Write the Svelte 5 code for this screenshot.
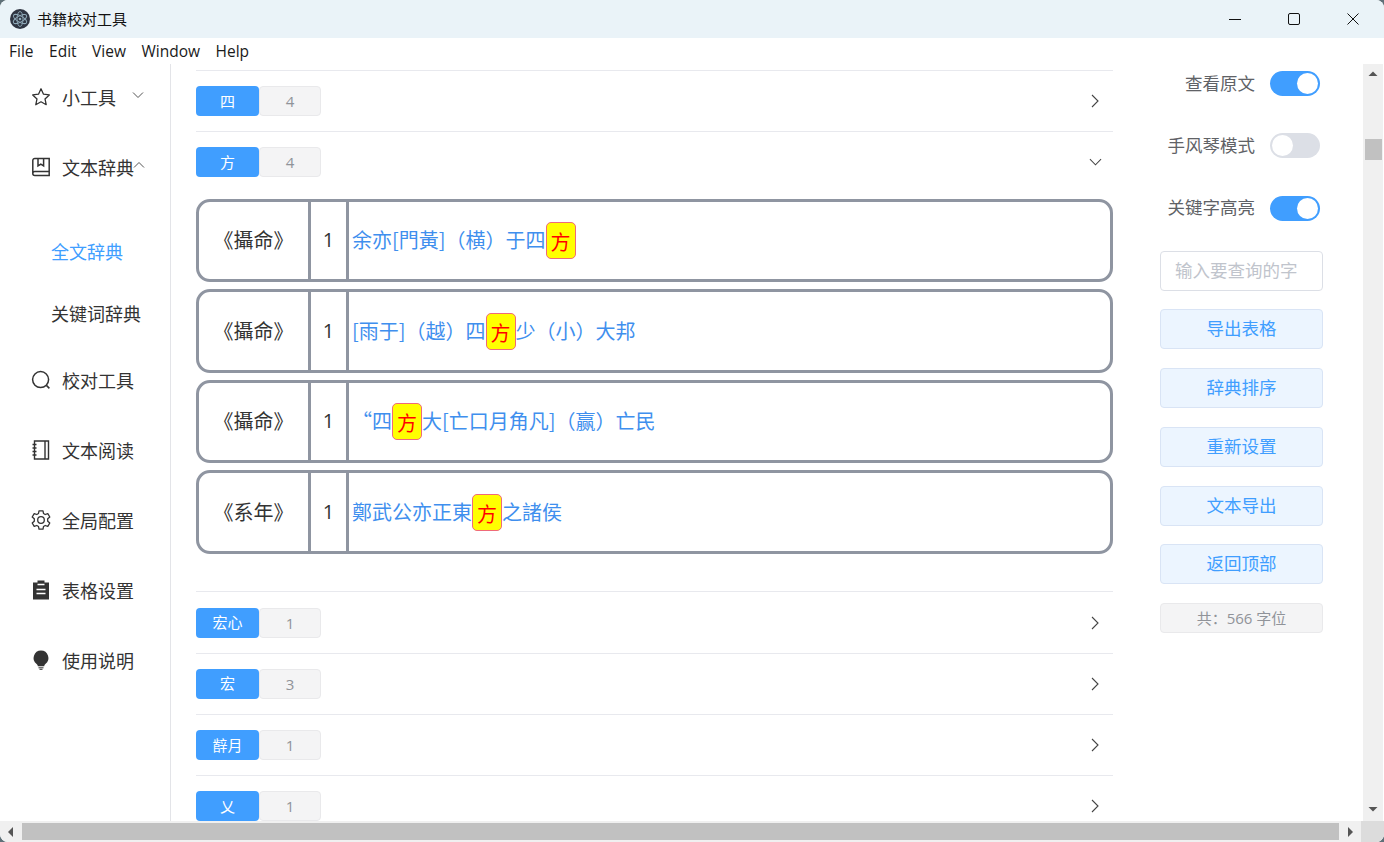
<script>
  const menus = ["File", "Edit", "View", "Window", "Help"];

  const navItems = [
    { label: "校对工具", icon: "search" },
    { label: "文本阅读", icon: "notebook" },
    { label: "全局配置", icon: "gear" },
    { label: "表格设置", icon: "clipboard" },
    { label: "使用说明", icon: "bulb" },
  ];

  const rows = [
    { book: "《攝命》", num: 1, before: "余亦[門黃]（横）于四", after: "" },
    { book: "《攝命》", num: 1, before: "[雨于]（越）四", after: "少（小）大邦" },
    { book: "《攝命》", num: 1, before: "“四", after: "大[亡口月角凡]（赢）亡民" },
    { book: "《系年》", num: 1, before: "鄭武公亦正東", after: "之諸侯" },
  ];

  const lowerGroups = [
    { name: "宏心", count: 1 },
    { name: "宏", count: 3 },
    { name: "辪月", count: 1 },
    { name: "乂", count: 1 },
  ];

  const actions = ["导出表格", "辞典排序", "重新设置", "文本导出", "返回顶部"];
</script>

<div class="window">
  <div class="titlebar">
    <svg class="logo" width="20" height="20" viewBox="0 0 20 20">
      <circle cx="10" cy="10" r="10" fill="#2f3542" />
      <g fill="none" stroke="#8fa9b8" stroke-width="0.9">
        <ellipse cx="10" cy="10" rx="7.5" ry="3" transform="rotate(30 10 10)" />
        <ellipse cx="10" cy="10" rx="7.5" ry="3" transform="rotate(90 10 10)" />
        <ellipse cx="10" cy="10" rx="7.5" ry="3" transform="rotate(150 10 10)" />
      </g>
      <circle cx="10" cy="10" r="1.3" fill="#8fa9b8" />
    </svg>
    <span class="app-title">书籍校对工具</span>
    <div class="win-buttons">
      <svg width="12" height="12" viewBox="0 0 12 12"><path d="M0 6.500H12" stroke="#111" fill="none" /></svg>
      <svg width="12" height="12" viewBox="0 0 12 12"><rect x="0.5" y="0.5" width="11" height="11" rx="1.5" stroke="#111" fill="none" /></svg>
      <svg width="12" height="12" viewBox="0 0 12 12"><path d="M0.5 0.5L11.500 11.500M11.500 0.5L0.5 11.500" stroke="#111" fill="none" /></svg>
    </div>
  </div>

  <div class="menubar">
    {#each menus as m}
      <span>{m}</span>
    {/each}
  </div>

  <div class="viewport">
    <div class="page">
      <nav class="sidebar">
        <div class="nav-item">
          <svg class="nav-icon" viewBox="0 0 20 20"><path d="M10 1.800l2.500 5.400 5.800.7-4.300 4 1.200 5.800L10 14.800l-5.200 2.900L6 11.900l-4.300-4 5.800-.7z" fill="none" stroke="#333" stroke-width="1.300" stroke-linejoin="round" /></svg>
          <span>小工具</span>
          <svg class="caret" viewBox="0 0 12 8"><path d="M1 1.500l5 5 5-5" fill="none" stroke="#555" stroke-width="1" /></svg>
        </div>
        <div class="nav-item">
          <svg class="nav-icon" viewBox="0 0 20 20"><path d="M1.800 16.500V3.500A2 2 0 0 1 3.800 1.500h14.400v17H3.800a2 2 0 0 1-2-2zm0 0a2 2 0 0 1 2-2h14.400M7 1.500v7.500l2.800-1.800L12.600 9V1.500" fill="none" stroke="#333" stroke-width="1.500" /></svg>
          <span>文本辞典</span>
          <svg class="caret up" viewBox="0 0 12 8"><path d="M1 6.500l5-5 5 5" fill="none" stroke="#555" stroke-width="1" /></svg>
        </div>
        <div class="sub-list">
          <div class="sub-item active">全文辞典</div>
          <div class="sub-item">关键词辞典</div>
        </div>
        {#each navItems as item}
          <div class="nav-item">
            {#if item.icon === "search"}
              <svg class="nav-icon" viewBox="0 0 20 20"><circle cx="9.600" cy="9.600" r="8" fill="none" stroke="#333" stroke-width="1.500" /><path d="M15.400 15.400l3 3" stroke="#333" stroke-width="1.500" /></svg>
            {:else if item.icon === "notebook"}
              <svg class="nav-icon" viewBox="0 0 20 20"><path d="M3.500 1h14v18h-14zM14 1v18" fill="none" stroke="#333" stroke-width="1.400" /><path d="M1.500 4.500h4M1.500 8h4M1.500 11.500h4M1.500 15h4" stroke="#333" stroke-width="1.300" /></svg>
            {:else if item.icon === "gear"}
              <svg class="nav-icon" viewBox="0 0 20 20"><path d="M8 .8h4l.5 2.700 1.700 1 2.600-.9 2 3.400-2.100 1.800v2.400l2.100 1.800-2 3.400-2.600-.9-1.700 1-.5 2.700H8l-.5-2.700-1.700-1-2.600.9-2-3.400 2.100-1.800V8.800L1.200 7l2-3.400 2.600.9 1.700-1z" fill="none" stroke="#333" stroke-width="1.300" stroke-linejoin="round" /><circle cx="10" cy="10" r="3.300" fill="none" stroke="#333" stroke-width="1.300" /></svg>
            {:else if item.icon === "clipboard"}
              <svg class="nav-icon" viewBox="0 0 20 20"><path d="M6.500 0.500h7v2h4.500v17H2v-17h4.500z" fill="#333" /><path d="M6.500 4.500h7M5.500 9.500h9M5.500 13.500h9" stroke="#fff" stroke-width="1.500" /></svg>
            {:else}
              <svg class="nav-icon" viewBox="0 0 20 20"><path d="M10 .5a7.500 7.500 0 0 0-4.400 13.500c.7.600 1.200 1.300 1.200 2.200h6.400c0-.9.500-1.600 1.200-2.200A7.500 7.500 0 0 0 10 .5z" fill="#333" /><path d="M7.500 17.800h5M8.500 19.300h3" stroke="#333" stroke-width="1" /></svg>
            {/if}
            <span>{item.label}</span>
          </div>
        {/each}
      </nav>

      <main class="content">
        <div class="group">
          <div class="group-tags">
            <span class="tag-name">四</span><span class="tag-count">4</span>
          </div>
          <svg class="chevron" viewBox="0 0 8 14"><path d="M1 1l6 6-6 6" fill="none" stroke="#444" stroke-width="1.100" /></svg>
        </div>
        <div class="group">
          <div class="group-tags">
            <span class="tag-name">方</span><span class="tag-count">4</span>
          </div>
          <svg class="chevron down" viewBox="0 0 14 8"><path d="M1 1l6 6 6-6" fill="none" stroke="#444" stroke-width="1.100" /></svg>
        </div>

        <div class="results">
          {#each rows as r}
            <div class="result">
              <div class="book">{r.book}</div>
              <div class="num">{r.num}</div>
              <div class="line"><span class="plain">{r.before}</span><span class="hit">方</span><span class="plain">{r.after}</span></div>
            </div>
          {/each}
        </div>

        {#each lowerGroups as g}
          <div class="group">
            <div class="group-tags">
              <span class="tag-name">{g.name}</span><span class="tag-count">{g.count}</span>
            </div>
            <svg class="chevron" viewBox="0 0 8 14"><path d="M1 1l6 6-6 6" fill="none" stroke="#444" stroke-width="1.100" /></svg>
          </div>
        {/each}
      </main>

      <aside class="tools">
        <div class="switch-row">
          <span class="switch-label">查看原文</span>
          <span class="switch on"></span>
        </div>
        <div class="switch-row">
          <span class="switch-label">手风琴模式</span>
          <span class="switch"></span>
        </div>
        <div class="switch-row">
          <span class="switch-label">关键字高亮</span>
          <span class="switch on"></span>
        </div>
        <input class="search" placeholder="输入要查询的字" />
        <div class="actions">
          {#each actions as a}
            <button>{a}</button>
          {/each}
        </div>
        <div class="total">共：566 字位</div>
      </aside>

      <div class="vscroll">
        <svg width="12" height="6" viewBox="0 0 12 6"><path d="M6 0.500l4.500 4.500h-9z" fill="#555" /></svg>
        <div class="vthumb"></div>
        <svg class="vdown" width="12" height="6" viewBox="0 0 12 6"><path d="M6 5.500L1.500 1h9z" fill="#555" /></svg>
      </div>
    </div>

    <div class="hscroll">
      <div class="harrow">
        <svg width="6" height="10" viewBox="0 0 6 10"><path d="M0 5l5-5v10z" fill="#555" /></svg>
      </div>
      <div class="hthumb"></div>
      <div class="harrow">
        <svg width="6" height="10" viewBox="0 0 6 10"><path d="M6 5L1 0v10z" fill="#555" /></svg>
      </div>
      <div class="corner"></div>
    </div>
  </div>
</div>

<style>
  :global(body) {
    margin: 0;
    overflow: hidden;
    background: #5f7078;
  }

  .window {
    width: 1384px;
    height: 842px;
    display: flex;
    flex-direction: column;
    overflow: hidden;
    border-radius: 8px;
    background: #fff;
    font-family: "Open Sans", "Noto Sans CJK SC", sans-serif;
    color: #333;
  }

  .titlebar {
    height: 38px;
    flex: none;
    display: flex;
    align-items: center;
    background: #eaf3f8;
    padding-left: 10px;
  }

  .logo {
    margin-right: 7px;
  }

  .app-title {
    font-family: "Noto Sans CJK SC", sans-serif;
    font-size: 15px;
    color: #111;
    padding-bottom: 2px;
  }

  .win-buttons {
    margin-left: auto;
    display: flex;
    gap: 47px;
    padding-right: 25px;
  }

  .menubar {
    height: 26px;
    flex: none;
    box-sizing: border-box;
    display: flex;
    align-items: center;
    gap: 15.5px;
    padding: 0 0 1px 9px;
    font-size: 15.5px;
    color: #1a1a1a;
  }

  .viewport {
    flex: 1;
    display: flex;
    flex-direction: column;
    min-height: 0;
  }

  .page {
    flex: 1;
    display: flex;
    min-height: 0;
    overflow: hidden;
  }

  .sidebar {
    width: 171px;
    flex: none;
    display: flex;
    flex-direction: column;
    gap: 4px;
    border-right: 1px solid #e3e4e8;
    box-sizing: border-box;
    font-family: "Noto Sans CJK SC", sans-serif;
    font-size: 18px;
  }

  .nav-item {
    height: 66px;
    flex: none;
    display: flex;
    align-items: center;
    padding-left: 31px;
    white-space: nowrap;
  }

  .nav-icon {
    width: 20px;
    height: 20px;
    margin-right: 11px;
    flex: none;
  }

  .caret {
    width: 12px;
    height: 8px;
    margin: 0 0 4px 16px;
  }

  .caret.up {
    margin-left: -1px;
  }

  .sub-list {
    margin: 16px 0 -1px;
  }

  .sub-item {
    height: 62px;
    display: flex;
    align-items: center;
    padding-left: 51px;
  }

  .sub-item.active {
    color: #409eff;
  }

  .content {
    width: 917px;
    flex: none;
    margin-left: 25px;
    padding-top: 6px;
    font-family: "Noto Sans CJK SC", sans-serif;
  }

  .group {
    height: 61.3px;
    border-top: 1px solid #e8e9ee;
    box-sizing: border-box;
    display: flex;
    align-items: center;
    justify-content: space-between;
    padding-right: 14px;
  }

  .group-tags {
    display: flex;
  }

  .tag-name {
    width: 63px;
    height: 30px;
    box-sizing: border-box;
    padding-bottom: 2px;
    background: #409eff;
    color: #fff;
    border-radius: 4px;
    display: flex;
    align-items: center;
    justify-content: center;
    font-size: 15px;
  }

  .tag-count {
    width: 62px;
    height: 30px;
    box-sizing: border-box;
    background: #f4f4f5;
    border: 1px solid #e9e9eb;
    border-radius: 4px;
    color: #909399;
    display: flex;
    align-items: center;
    justify-content: center;
    font-family: "Open Sans", sans-serif;
    font-size: 15px;
  }

  .chevron {
    width: 8px;
    height: 14px;
  }

  .chevron.down {
    width: 13px;
    height: 8px;
    margin-right: -3px;
  }

  .results {
    padding: 6.4px 0 37.4px;
    display: flex;
    flex-direction: column;
    gap: 7px;
  }

  .result {
    height: 83.5px;
    box-sizing: border-box;
    border: 3px solid #8f95a1;
    border-radius: 14px;
    display: flex;
    align-items: center;
  }

  .book {
    width: 112px;
    height: 100%;
    box-sizing: border-box;
    display: flex;
    align-items: center;
    justify-content: center;
    padding-bottom: 2px;
    font-size: 20px;
    border-right: 3px solid #8f95a1;
  }

  .num {
    width: 38px;
    height: 100%;
    box-sizing: border-box;
    display: flex;
    align-items: center;
    justify-content: center;
    padding-bottom: 2px;
    font-family: "Open Sans", sans-serif;
    font-size: 20px;
    border-right: 3px solid #8f95a1;
  }

  .line {
    display: flex;
    align-items: center;
    padding-left: 3px;
    font-size: 20px;
    color: #3f8fee;
    white-space: nowrap;
  }

  .plain {
    padding-bottom: 2px;
  }

  .hit {
    width: 30px;
    height: 37px;
    line-height: 37px;
    box-sizing: border-box;
    text-align: center;
    background: #ffff00;
    color: #f00;
    border: 1px solid #ef6a7a;
    border-radius: 5px;
  }

  .tools {
    width: 163px;
    flex: none;
    margin-left: 47px;
    padding-top: 7px;
    font-family: "Noto Sans CJK SC", sans-serif;
  }

  .switch-row {
    height: 25px;
    margin-bottom: 37.4px;
    display: flex;
    align-items: center;
    justify-content: flex-end;
    gap: 15px;
    font-size: 17.5px;
    color: #606266;
    padding-right: 3px;
  }

  .switch-label {
    padding-bottom: 3px;
  }

  .switch {
    width: 50px;
    height: 25px;
    flex: none;
    border-radius: 13px;
    background: #dcdfe6;
    position: relative;
  }

  .switch::after {
    content: "";
    position: absolute;
    top: 2px;
    left: 2px;
    width: 21px;
    height: 21px;
    border-radius: 50%;
    background: #fff;
  }

  .switch.on {
    background: #409eff;
  }

  .switch.on::after {
    left: 27px;
  }

  .search {
    display: block;
    width: 100%;
    height: 40px;
    box-sizing: border-box;
    border: 1px solid #dcdfe6;
    border-radius: 4px;
    padding: 0 14px 3px;
    margin-top: -6.8px;
    font-family: inherit;
    font-size: 17.5px;
    outline: none;
  }

  .search::placeholder {
    color: #c0c4cc;
  }

  .actions {
    margin-top: 18px;
    display: flex;
    flex-direction: column;
    gap: 18.75px;
  }

  .actions button {
    height: 40px;
    box-sizing: border-box;
    background: #ecf5ff;
    border: 1px solid #d9e4f5;
    border-radius: 4px;
    color: #409eff;
    font-family: inherit;
    font-size: 17.5px;
    padding: 0 0 3px;
  }

  .total {
    margin-top: 18.6px;
    height: 30px;
    box-sizing: border-box;
    background: #f4f4f5;
    border: 1px solid #e9e9eb;
    border-radius: 4px;
    color: #909399;
    font-family: "Open Sans", "Noto Sans CJK SC", sans-serif;
    font-size: 15px;
    display: flex;
    align-items: center;
    justify-content: center;
  }

  .vscroll {
    width: 20px;
    flex: none;
    margin-left: 40px;
    background: #f0f0f0;
    display: flex;
    flex-direction: column;
    align-items: center;
    padding-top: 7px;
    box-sizing: border-box;
  }

  .vthumb {
    width: 17px;
    height: 21px;
    margin-top: 62px;
    background: #c1c1c1;
  }

  .vdown {
    margin-top: auto;
    margin-bottom: 9px;
  }

  .hscroll {
    height: 21px;
    flex: none;
    display: flex;
    align-items: center;
    background: #f0f0f0;
  }

  .harrow {
    width: 22px;
    height: 100%;
    display: flex;
    align-items: center;
    justify-content: center;
    flex: none;
  }

  .hthumb {
    width: 1317px;
    height: 17px;
    background: #c1c1c1;
    flex: none;
  }

  .corner {
    flex: 1;
    height: 100%;
    background: #dcdcdc;
  }
</style>
